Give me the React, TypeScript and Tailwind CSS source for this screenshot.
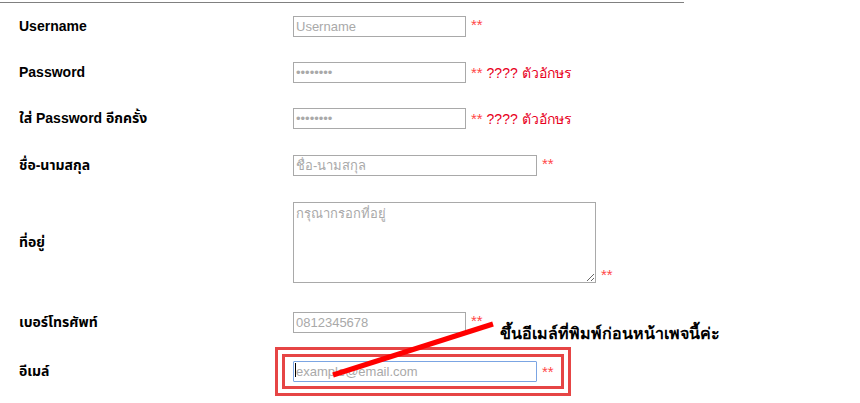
import React from "react";

const labelFont = { fontFamily: "Tahoma, 'Liberation Sans', 'Noto Sans Thai', sans-serif" };
const fieldFont = { fontFamily: "'Liberation Sans', Arial, sans-serif" };

function Star({ children }: { children?: React.ReactNode }) {
  return (
    <span className="ml-[5px] text-[15px] leading-none text-[#ff4747]" style={fieldFont}>
      **{children}
    </span>
  );
}

const inputCls =
  "h-[21px] border border-[#a9a9a9] bg-white px-[2px] text-[13px] text-[#333] placeholder:text-[#a9a9a9] outline-none";

export default function App() {
  return (
    <div className="relative h-[403px] w-[860px] overflow-hidden bg-white" style={fieldFont}>
      {/* top rule */}
      <div className="mt-[2px] h-px w-[684px] bg-[#808080]" />

      <div className="flex flex-col pl-[19px]">
        <div className="mt-[13px] flex items-center">
          <span className="w-[274px] text-[14px] font-bold text-black" style={labelFont}>Username</span>
          <input className={`${inputCls} w-[173px]`} style={fieldFont} placeholder="Username" />
          <span className="-mt-[3px]">
            <Star />
          </span>
        </div>

        <div className="mt-[25px] flex items-center">
          <span className="w-[274px] text-[14px] font-bold text-black" style={labelFont}>Password</span>
          <input className={`${inputCls} w-[173px] text-[11px]`} style={fieldFont} placeholder="••••••••" />
          <Star>
            <span className="text-[14px] text-[#e8001c]"> ???? ตัวอักษร</span>
          </Star>
        </div>

        <div className="mt-[25px] flex items-center">
          <span className="w-[274px] text-[14px] font-bold text-black" style={labelFont}>ใส่ Password อีกครั้ง</span>
          <input className={`${inputCls} w-[173px] text-[11px]`} style={fieldFont} placeholder="••••••••" />
          <Star>
            <span className="text-[14px] text-[#e8001c]"> ???? ตัวอักษร</span>
          </Star>
        </div>

        <div className="mt-[26px] flex items-center">
          <span className="w-[274px] text-[14px] font-bold text-black" style={labelFont}>ชื่อ-นามสกุล</span>
          <input className={`${inputCls} w-[244px]`} style={fieldFont} placeholder="ชื่อ-นามสกุล" />
          <span className="-mt-[3px]">
            <Star />
          </span>
        </div>

        <div className="mt-[26px] flex items-center">
          <span className="w-[274px] text-[14px] font-bold text-black" style={labelFont}>ที่อยู่</span>
          <div className="flex items-end">
            <textarea
              className="h-[81px] w-[303px] border border-[#a9a9a9] bg-white px-[2px] py-[1px] text-[13px] placeholder:text-[#a9a9a9] outline-none"
              style={fieldFont}
              placeholder="กรุณากรอกที่อยู่"
            />
            <span className="-mb-[4px]">
              <Star />
            </span>
          </div>
        </div>

        <div className="mt-[29px] flex items-center">
          <span className="w-[274px] text-[14px] font-bold text-black" style={labelFont}>เบอร์โทรศัพท์</span>
          <input className={`${inputCls} w-[173px]`} style={fieldFont} placeholder="0812345678" />
          <span className="-mt-[3px]">
            <Star />
          </span>
        </div>

        <div className="mt-[26px] flex items-center">
          <span className="w-[274px] text-[14px] font-bold text-black" style={labelFont}>อีเมล์</span>
          <div className="relative">
            <input
              className="h-[21px] w-[244px] rounded-[1px] border border-[#7ba5e3] bg-white px-[2px] text-[13px] placeholder:text-[#a9a9a9] outline-none"
              style={fieldFont}
              placeholder="example@email.com"
            />
            <span className="absolute left-[2px] top-[4px] h-[14px] w-px bg-black" />
          </div>
          <Star />
        </div>
      </div>

      {/* annotation: red frame */}
      <div className="absolute left-[275px] top-[347px] h-[49px] w-[296px] border-[3px] border-[#e64545] p-[4px]">
        <div className="h-full w-full border-[3px] border-[#e64545]" />
      </div>

      {/* annotation: arrow line */}
      <svg className="pointer-events-none absolute left-0 top-0" width="860" height="403">
        <line x1="333" y1="375" x2="493" y2="324" stroke="#ff0000" strokeWidth="5" />
      </svg>

      <span
        className="absolute left-[500px] top-[322px] text-[16px] text-black"
        style={{ fontFamily: "Tahoma, 'Liberation Serif', serif", fontWeight: 600 }}
      >
        ขึ้นอีเมล์ที่พิมพ์ก่อนหน้าเพจนี้ค่ะ
      </span>
    </div>
  );
}
